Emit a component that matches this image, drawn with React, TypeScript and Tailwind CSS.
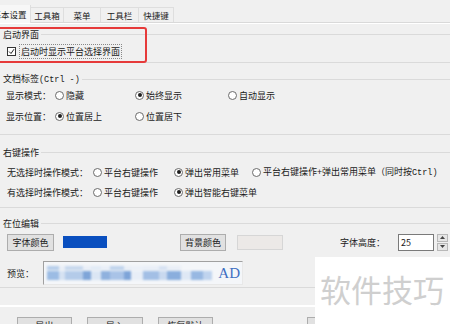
import React from 'react';

const Radio = ({ checked }: { checked?: boolean }) => (
  <span className="w-[9px] h-[9px] rounded-full border border-[#6b6b6b] bg-white flex items-center justify-center flex-shrink-0">
    {checked && <span className="w-[4px] h-[4px] rounded-full bg-[#1f1f1f]" />}
  </span>
);

const Option = ({ label, checked, className = '' }: { label: React.ReactNode; checked?: boolean; className?: string }) => (
  <div className={`flex items-center gap-[2px] ${className}`}>
    <Radio checked={checked} />
    <span className="whitespace-nowrap">{label}</span>
  </div>
);

const Group = ({ title, className = '', children }: { title: React.ReactNode; className?: string; children?: React.ReactNode }) => (
  <div className={`border-b border-[#dadada] ${className}`}>
    <div className="flex items-center h-[14px]">
      <span className="pl-[3px] pr-[2px] whitespace-nowrap">{title}</span>
      <div className="flex-1 h-px bg-[#dadada]" />
    </div>
    {children}
  </div>
);

const WinButton = ({ label, className = '' }: { label: string; className?: string }) => (
  <div className={`h-[17px] bg-[#e1e1e1] border border-[#adadad] flex items-center justify-center whitespace-nowrap ${className}`}>
    {label}
  </div>
);

const Mono = ({ children }: { children: React.ReactNode }) => (
  <span className="font-['Liberation_Mono',monospace] text-[8.5px]">{children}</span>
);

const tabs = [
  { label: '工具箱', w: 'w-[33px]' },
  { label: '菜单', w: 'w-[37px]' },
  { label: '工具栏', w: 'w-[38px]' },
  { label: '快捷键', w: 'w-[35px]' },
];

const previewBlocks = [
  { w: 'w-[12px]', c: 'bg-[#9cbce4]' },
  { w: 'w-[6px]', c: 'bg-[#d6e2f2]' },
  { w: 'w-[18px]', c: 'bg-[#b4cbe9]' },
  { w: 'w-[8px]', c: 'bg-[#7fa5d8]' },
  { w: 'w-[10px]', c: 'bg-[#dbe6f4]' },
  { w: 'w-[9px]', c: 'bg-[#8fb1de]' },
  { w: 'w-[14px]', c: 'bg-[#a9c3e7]' },
  { w: 'w-[7px]', c: 'bg-[#7ea4d8]' },
  { w: 'w-[12px]', c: 'bg-[#e8eef7]' },
  { w: 'w-[16px]', c: 'bg-[#a3bfe5]' },
  { w: 'w-[8px]', c: 'bg-[#c9d9ef]' },
  { w: 'w-[14px]', c: 'bg-[#8aaedd]' },
  { w: 'w-[10px]', c: 'bg-[#dfe8f5]' },
  { w: 'w-[12px]', c: 'bg-[#98b8e2]' },
  { w: 'w-[9px]', c: 'bg-[#bfd3ee]' },
];

export default function App() {
  return (
    <div className="relative w-[450px] h-[324px] overflow-hidden bg-[#f0f0f0] text-[9px] leading-none text-[#1a1a1a] font-['Noto_Sans_CJK_SC','Noto_Sans',sans-serif]">
      {/* Tabs */}
      <div className="flex items-end h-[24px] border-b border-white shadow-[inset_0_-1px_0_#d9d9d9]">
        <div className="w-[42px] -ml-[11px] h-[18px] bg-[#f7f7f7] border-r border-[#dedede] flex items-center justify-center text-[8.5px]">
          基本设置
        </div>
        {tabs.map((t) => (
          <div key={t.label} className={`${t.w} h-[15px] border-r border-t border-[#dedede] flex items-center justify-center text-[8.5px] mb-[1px]`}>
            {t.label}
          </div>
        ))}
      </div>

      {/* 启动界面 */}
      <Group title="启动界面" className="mt-[3px] h-[36px]">
        <div className="flex items-center h-[20px] pl-[7px] gap-[3px]">
          <span className="w-[9px] h-[9px] border border-[#333] bg-white flex items-center justify-center">
            <svg width="7" height="7" viewBox="0 0 7 7">
              <path d="M1 3.5 L3 5.5 L6 1.2" fill="none" stroke="#222" strokeWidth="1" />
            </svg>
          </span>
          <span className="px-[1px] py-[2px] border border-dotted border-[#888]">启动时显示平台选择界面</span>
        </div>
      </Group>

      {/* 文档标签 */}
      <Group
        title={<>文档标签<Mono>(Ctrl -)</Mono></>}
        className="pt-[9px] pb-[6px]"
      >
        <div className="flex items-center h-[18px] pl-[6px]">
          <span className="w-[49px]">显示模式：</span>
          <Option label="隐藏" className="w-[80px]" />
          <Option label="始终显示" checked className="w-[93px]" />
          <Option label="自动显示" />
        </div>
        <div className="flex items-center h-[24px] pl-[6px]">
          <span className="w-[49px]">显示位置：</span>
          <Option label="位置居上" checked className="w-[80px]" />
          <Option label="位置居下" />
        </div>
      </Group>

      {/* 右键操作 */}
      <Group title="右键操作" className="pt-[10px] pb-[5px]">
        <div className="flex items-center h-[20px] mt-[3px] pl-[7px]">
          <span className="w-[86px]">无选择时操作模式：</span>
          <Option label="平台右键操作" className="w-[81px]" />
          <Option label="弹出常用菜单" checked className="w-[78px]" />
          <Option label={<>平台右键操作+弹出常用菜单（同时按<Mono>Ctrl)</Mono></>} />
        </div>
        <div className="flex items-center h-[20px] pl-[7px]">
          <span className="w-[86px]">有选择时操作模式：</span>
          <Option label="平台右键操作" className="w-[81px]" />
          <Option label="弹出智能右键菜单" checked />
        </div>
      </Group>

      {/* 在位编辑 */}
      <Group title="在位编辑" className="pt-[8px] pb-[2px]">
        <div className="flex items-center h-[18px] mt-[3px] pl-[7px]">
          <WinButton label="字体颜色" className="w-[47px]" />
          <div className="ml-[9px] w-[44px] h-[12px] bg-[#0a4fbf]" />
          <WinButton label="背景颜色" className="ml-[73px] w-[46px]" />
          <div className="ml-[11px] w-[46px] h-[15px] bg-[#ece9e7] border border-[#d6d6d6]" />
          <span className="ml-[57px] w-[58px]">字体高度：</span>
          <div className="w-[36px] h-[17px] bg-white border border-[#7a7a7a] flex items-center pl-[2px]">25</div>
          <div className="ml-[3px] w-[11px] h-[17px] flex flex-col gap-px">
            <div className="flex-1 bg-[#e6e6e6] border border-[#b8b8b8] flex items-center justify-center">
              <svg width="5" height="3" viewBox="0 0 5 3"><path d="M0 3 L2.5 0 L5 3Z" fill="#444" /></svg>
            </div>
            <div className="flex-1 bg-[#e6e6e6] border border-[#b8b8b8] flex items-center justify-center">
              <svg width="5" height="3" viewBox="0 0 5 3"><path d="M0 0 L2.5 3 L5 0Z" fill="#444" /></svg>
            </div>
          </div>
        </div>
        <div className="flex items-center h-[24px] mt-[10px] pl-[7px]">
          <span className="w-[36px]">预览：</span>
          <div className="w-[200px] h-[24px] bg-[#f4f6f9] border border-[#a0a0a0] border-r-[#e8e8e8] border-b-[#e8e8e8] flex items-center pl-[3px] overflow-hidden">
            <div className="flex flex-col gap-[1px] blur-[0.8px]">
              <div className="flex h-[4px] opacity-70">
                {previewBlocks.slice(0, 12).map((b, i) => (
                  <div key={i} className={`${b.w} ${i % 2 ? 'bg-[#e4ecf6]' : b.c}`} />
                ))}
              </div>
              <div className="flex h-[9px]">
                {previewBlocks.map((b, i) => (
                  <div key={i} className={`${b.w} ${b.c}`} />
                ))}
              </div>
            </div>
            <span className="ml-auto pr-[2px] text-[15px] text-[#3e6fc2] font-['Liberation_Serif',serif]">AD</span>
          </div>
        </div>
      </Group>

      {/* separator + buttons */}
      <div className="mt-[17px] h-[2px] border-t border-[#dadada] border-b border-white" />
      <div className="flex items-center mt-[10px] pl-[17px]">
        <WinButton label="导出" className="w-[55px]" />
        <WinButton label="导入" className="ml-[15px] w-[56px]" />
        <WinButton label="恢复默认" className="ml-[15px] w-[55px]" />
        <WinButton label="确定" className="ml-[94px] w-[55px] border-[#0078d7]" />
      </div>

      {/* red annotation box */}
      <div className="absolute left-[-3px] top-[27px] w-[150px] h-[36px] border-2 border-[#e63a3a] rounded-[3px] pointer-events-none" />

      {/* watermark */}
      <div className="absolute left-[315px] top-[257px] right-0 bottom-0 bg-white pt-[16px] pl-[5px]">
        <span className="text-[31px] leading-none text-[#cfcfcf] whitespace-nowrap">软件技巧</span>
      </div>
    </div>
  );
}
